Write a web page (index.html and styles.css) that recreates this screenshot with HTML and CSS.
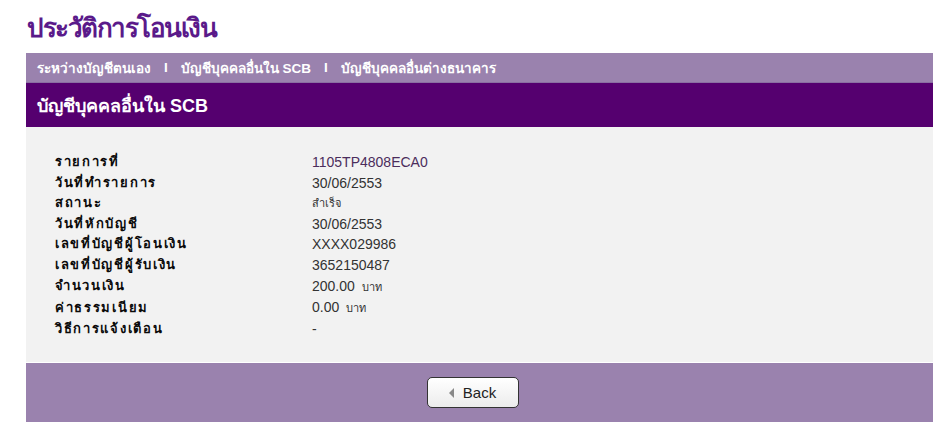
FILE: index.html
```html
<!DOCTYPE html>
<html lang="th">
<head>
    <meta charset="UTF-8">
    <title>ประวัติการโอนเงิน</title>
    <link rel="stylesheet" href="styles.css">
</head>
<body>

    <h1 class="pageTitle">ประวัติการโอนเงิน</h1>

    <div class="wrap">
        <div class="subNav">
            <a href="#">ระหว่างบัญชีตนเอง</a>
            <span class="sep">I</span>
            <a href="#">บัญชีบุคคลอื่นใน SCB</a>
            <span class="sep">I</span>
            <a href="#">บัญชีบุคคลอื่นต่างธนาคาร</a>
        </div>

        <div class="boxHead">บัญชีบุคคลอื่นใน SCB</div>

        <div class="boxBody">
            <table class="detail">
                <tr><td class="lbl">รายการที่</td><td class="val first">1105TP4808ECA0</td></tr>
                <tr><td class="lbl">วันที่ทำรายการ</td><td class="val">30/06/2553</td></tr>
                <tr><td class="lbl">สถานะ</td><td class="val small">สำเร็จ</td></tr>
                <tr><td class="lbl">วันที่หักบัญชี</td><td class="val">30/06/2553</td></tr>
                <tr><td class="lbl">เลขที่บัญชีผู้โอนเงิน</td><td class="val">XXXX029986</td></tr>
                <tr><td class="lbl">เลขที่บัญชีผู้รับเงิน</td><td class="val">3652150487</td></tr>
                <tr><td class="lbl">จำนวนเงิน</td><td class="val">200.00 <span class="unit">บาท</span></td></tr>
                <tr><td class="lbl">ค่าธรรมเนียม</td><td class="val">0.00 <span class="unit">บาท</span></td></tr>
                <tr><td class="lbl">วิธีการแจ้งเตือน</td><td class="val">-</td></tr>
            </table>
        </div>

        <div class="boxFoot">
            <button class="backBtn" type="button"><span class="arrow"></span>Back</button>
        </div>
    </div>

</body>
</html>
```

FILE: styles.css
```css
body {
    margin: 0;
    background: #ffffff;
    font-family: "Liberation Sans", "DejaVu Sans", sans-serif;
}

.pageTitle {
    margin: 0;
    padding: 11px 0 0 27px;
    height: 53px;
    box-sizing: border-box;
    font-size: 26px;
    font-weight: 600;
    color: #5a1a8a;
    letter-spacing: -1.5px;
    line-height: 34px;
}

.wrap {
    margin: 0 12px 0 26px;
    width: 907px;
}

.subNav {
    background: #9a82ae;
    height: 30px;
    padding-left: 11px;
    display: flex;
    align-items: center;
    border-bottom: 1px solid #8a6ea2;
    box-sizing: border-box;
}

.subNav a {
    color: #ffffff;
    font-weight: bold;
    font-size: 13.5px;
    text-decoration: none;
}

.subNav .sep {
    color: #ffffff;
    font-weight: bold;
    font-size: 13.5px;
    margin: 0 13px;
}

.boxHead {
    background: #55006f;
    height: 44px;
    padding-left: 11px;
    display: flex;
    align-items: center;
    color: #ffffff;
    font-weight: bold;
    font-size: 18px;
}

.boxBody {
    background: #f2f2f2;
    height: 236px;
    padding: 25px 0 0 29px;
    box-sizing: border-box;
    border-bottom: 1px solid #ffffff;
}

.detail {
    border-collapse: collapse;
}

.detail td {
    padding: 0;
    height: 20.6px;
    line-height: 20.6px;
}

.detail .lbl {
    width: 257px;
    font-size: 13px;
    font-weight: bold;
    letter-spacing: 1.7px;
    color: #0a0a0a;
}

.detail .val {
    font-size: 14px;
    color: #333333;
}

.detail .first {
    color: #4b2d5c;
}

.detail .small,
.detail .unit {
    font-size: 11px;
}

.detail .unit {
    margin-left: 3px;
}

.boxFoot {
    background: #9a82ae;
    height: 59px;
    display: flex;
    justify-content: center;
    align-items: center;
}

.backBtn {
    width: 92px;
    height: 31px;
    margin-right: 14px;
    border: 1px solid #333333;
    border-radius: 5px;
    background: linear-gradient(#ffffff, #ececec);
    font-family: "Liberation Sans", "DejaVu Sans", sans-serif;
    font-size: 15px;
    color: #222222;
    display: flex;
    align-items: center;
    justify-content: center;
    padding: 0;
    cursor: pointer;
}

.backBtn .arrow {
    width: 0;
    height: 0;
    border-top: 5px solid transparent;
    border-bottom: 5px solid transparent;
    border-right: 5px solid #888888;
    margin-right: 9px;
}
```
